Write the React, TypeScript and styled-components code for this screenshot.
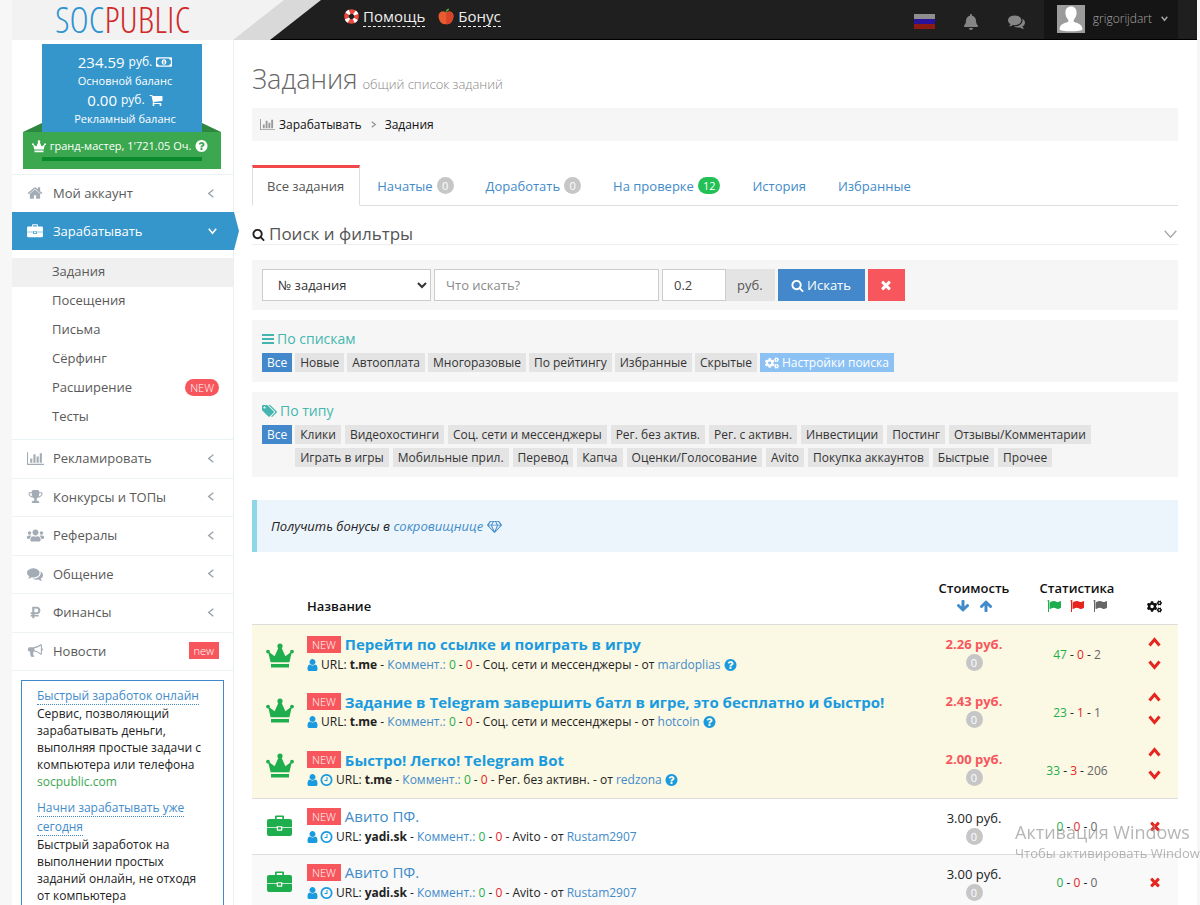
import React from "react";
import styled, { createGlobalStyle, css } from "styled-components";
import {
  FaBell,
  FaCogs,
  FaRegMoneyBillAlt,
  FaRubleSign,
  FaUsers,
} from "react-icons/fa";

const GlobalStyle = createGlobalStyle`
  *, *::before, *::after { box-sizing: border-box; }
  html { overflow-x: hidden; }
  body {
    margin: 0;
    background: #f7f7f7;
    color: #222;
    font-family: "Open Sans", "Noto Sans", sans-serif;
    font-size: 12px;
    line-height: 18px;
  }
  a { color: #428bca; text-decoration: none; }
  h1, h2, h3, p, ul { margin: 0; padding: 0; }
  ul { list-style: none; }
  button, input, select { font-family: inherit; margin: 0; }
`;

/* ---------- icons ---------- */

const paths = {
  search:
    "M1216 832q0-185-131.5-316.5t-316.5-131.5-316.5 131.5-131.5 316.5 131.5 316.5 316.5 131.5 316.5-131.5 131.5-316.5zm512 832q0 52-38 90t-90 38q-54 0-90-38l-343-342q-179 124-399 124-143 0-273.5-55.5t-225-150-150-225-55.5-273.5 55.5-273.5 150-225 225-150 273.5-55.5 273.5 55.5 225 150 150 225 55.5 273.5q0 220-124 399l343 343q37 37 37 90z",
  user:
    "M1536 1399q0 109-62.5 187t-150.5 78h-854q-88 0-150.5-78t-62.5-187q0-85 8.5-160.5t31.5-152 58.5-131 94-89 134.5-34.5q131 128 313 128t313-128q76 0 134.5 34.5t94 89 58.5 131 31.5 152 8.5 160.5zm-256-887q0 159-112.5 271.5t-271.5 112.5-271.5-112.5-112.5-271.5 112.5-271.5 271.5-112.5 271.5 112.5 112.5 271.5z",
  clock:
    "M1024 544v448q0 14-9 23t-23 9h-320q-14 0-23-9t-9-23v-64q0-14 9-23t23-9h224v-352q0-14 9-23t23-9h64q14 0 23 9t9 23zm416 352q0-148-73-273t-198-198-273-73-273 73-198 198-73 273 73 273 198 198 273 73 273-73 198-198 73-273zm224 0q0 209-103 385.5t-279.5 279.5-385.5 103-385.5-103-279.5-279.5-103-385.5 103-385.5 279.5-279.5 385.5-103 385.5 103 279.5 279.5 103 385.5z",
  question:
    "M1024 1376v-192q0-14-9-23t-23-9h-192q-14 0-23 9t-9 23v192q0 14 9 23t23 9h192q14 0 23-9t9-23zm256-672q0-88-55.5-163t-138.5-116-170-41q-243 0-371 213-15 24 8 42l132 100q7 6 19 6 16 0 25-12 53-68 86-92 34-24 86-24 48 0 85.5 26t37.5 59q0 38-20 61t-68 45q-63 28-115.5 86.5t-52.5 125.5v36q0 14 9 23t23 9h192q14 0 23-9t9-23q0-19 21.5-49.5t54.5-49.5q32-18 49-28.5t46-35 44.5-48 28-60.5 12.5-81zm384 192q0 209-103 385.5t-279.5 279.5-385.5 103-385.5-103-279.5-279.5-103-385.5 103-385.5 279.5-279.5 385.5-103 385.5 103 279.5 279.5 103 385.5z",
  times:
    "M1490 1322q0 40-28 68l-136 136q-28 28-68 28t-68-28l-294-294-294 294q-28 28-68 28t-68-28l-136-136q-28-28-28-68t28-68l294-294-294-294q-28-28-28-68t28-68l136-136q28-28 68-28t68 28l294 294 294-294q28-28 68-28t68 28l136 136q28 28 28 68t-28 68l-294 294 294 294q28 28 28 68z",
  chart:
    "M640 896v512h-256v-512h256zm384-512v1024h-256v-1024h256zm1024 1152v128h-2048v-1536h128v1408h1920zm-640-896v768h-256v-768h256zm384-384v1152h-256v-1152h256z",
  comments:
    "M1408 768q0 139-94 257t-256.5 186.5-353.5 68.5q-86 0-176-16-124 88-278 128-36 9-86 16h-3q-11 0-20.5-8t-11.5-21q-1-3-1-6.5t.5-6.5 2-6l2.5-5 3.5-5.5 4-5 4.5-5 4-4.5q5-6 23-25t26-29.5 22.5-29 25-38.5 20.5-44q-124-72-195-177t-71-224q0-139 94-257t256.5-186.5 353.5-68.5 353.5 68.5 256.5 186.5 94 257zm384 256q0 120-71 224.5t-195 176.5q10 24 20.5 44t25 38.5 22.5 29 26 29.5 23 25q1 1 4 4.5t4.5 5 4 5 3.5 5.5l2.5 5 2 6 .5 6.5-1 6.5q-3 14-13 22t-22 7q-50-7-86-16-154-40-278-128-90 16-176 16-271 0-472-132 58 4 88 4 161 0 309-45t264-129q125-92 192-212t67-254q0-77-23-152 129 71 204 178t75 230z",
  flag:
    "M320 256q0 72-64 110v1266q0 13-9.5 22.5t-22.5 9.5h-64q-13 0-22.5-9.5t-9.5-22.5v-1266q-64-38-64-110 0-53 37.5-90.5t90.5-37.5 90.5 37.5 37.5 90.5zm1472 64v763q0 25-12.5 38.5t-39.5 27.5q-215 116-369 116-61 0-123.5-22t-108.5-48-115.5-48-142.5-22q-192 0-464 146-17 9-33 9-26 0-45-19t-19-45v-742q0-32 31-55 21-14 79-43 236-120 421-120 107 0 200 29t219 88q38 19 88 19 54 0 117.5-21t110-47 88-47 54.5-21q26 0 45 19t19 45z",
  home:
    "M1472 992v480q0 26-19 45t-45 19h-384v-384h-256v384h-384q-26 0-45-19t-19-45v-480q0-1 .5-3t.5-3l575-474 575 474q1 2 1 6zm223-69l-62 74q-8 9-21 11h-3q-13 0-21-7l-692-577-692 577q-12 8-24 7-13-2-21-11l-62-74q-8-10-7-23.5t11-21.5l719-599q32-26 76-26t76 26l244 204v-195q0-14 9-23t23-9h192q14 0 23 9t9 23v408l219 182q10 8 11 21.5t-7 23.5z",
  tags:
    "M448 448q0-53-37.5-90.5t-90.5-37.5-90.5 37.5-37.5 90.5 37.5 90.5 90.5 37.5 90.5-37.5 37.5-90.5zm1067 576q0 53-37 90l-491 492q-39 37-91 37-53 0-90-37l-715-716q-38-37-64.5-101t-26.5-117v-416q0-52 38-90t90-38h416q53 0 117 26.5t102 64.5l715 714q37 39 37 91zm384 0q0 53-37 90l-491 492q-39 37-91 37-36 0-59-14t-53-45l470-470q37-37 37-90 0-52-37-91l-715-714q-38-38-102-64.5t-117-26.5h224q53 0 117 26.5t102 64.5l715 714q37 39 37 91z",
  arrowDown:
    "M1675 832q0 53-37 90l-651 652q-39 37-91 37-53 0-90-37l-651-652q-38-36-38-90 0-53 38-91l74-75q39-37 91-37 53 0 90 37l294 294v-704q0-52 38-90t90-38h128q52 0 90 38t38 90v704l294-294q37-37 90-37 52 0 91 37l75 75q37 39 37 91z",
  arrowUp:
    "M1675 960q0-53-37-90l-651-652q-39-37-91-37-53 0-90 37l-651 652q-38 36-38 90 0 53 38 91l74 75q39 37 91 37 53 0 90-37l294-294v704q0 52 38 90t90 38h128q52 0 90-38t38-90v-704l294 294q37 37 90 37 52 0 91-37l75-75q37-39 37-91z",
  bullhorn:
    "M1664 640q53 0 90.5 37.5t37.5 90.5-37.5 90.5-90.5 37.5v384q0 52-38 90t-90 38q-417-347-812-380-58 19-91 66t-31 100.5 40 92.5q-20 33-23 65.5t6 58 33.5 55 48 50 61.5 50.5q-29 58-111.5 83t-168.5 11.5-132-55.5q-7-23-29.5-87.5t-32-94.5-23-89-15-101 3.5-98.5 22-110.5h-122q-66 0-113-47t-47-113v-192q0-66 47-113t113-47h480q435 0 896-384 52 0 90 38t38 90v384zm-128 604v-954q-394 302-768 343v270q377 42 768 341z",
  trophy:
    "M522 883q-74-162-74-371h-256v96q0 78 94.5 162t235.5 113zm1078-275v-96h-256q0 209-74 371 141-29 235.5-113t94.5-162zm128-128v128q0 71-41.5 143t-112 130-173 97.5-215.5 44.5q-42 54-95 95-38 34-52.5 72.5t-14.5 89.5q0 54 30.5 91t97.5 37q75 0 133.5 45.5t58.5 114.5v64q0 14-9 23t-23 9h-832q-14 0-23-9t-9-23v-64q0-69 58.5-114.5t133.5-45.5q67 0 97.5-37t30.5-91q0-51-14.5-89.5t-52.5-72.5q-53-41-95-95-113-5-215.5-44.5t-173-97.5-112-130-41.5-143v-128q0-40 28-68t68-28h288v-96q0-66 47-113t113-47h576q66 0 113 47t47 113v96h288q40 0 68 28t28 68z",
  cart:
    "M704 1536q0 52-38 90t-90 38-90-38-38-90 38-90 90-38 90 38 38 90zm896 0q0 52-38 90t-90 38-90-38-38-90 38-90 90-38 90 38 38 90zm128-1088v512q0 24-16.5 42.5t-40.5 21.5l-1044 122q13 60 13 70 0 16-24 64h920q26 0 45 19t19 45-19 45-45 19h-1024q-26 0-45-19t-19-45q0-11 8-31.5t16-36 21.5-40 15.5-29.5l-177-823h-204q-26 0-45-19t-19-45 19-45 45-19h256q16 0 28.5 6.5t19.5 15.5 13 24.5 8 26 5.5 29.5 4.5 26h1201q26 0 45 19t19 45z",
  diamond:
    "M212 768l623 665-300-665h-323zM1024 1540l349-772h-698l349 772zM578 640l204-384h-262l-288 384h346zM1213 1433l623-665h-323l-300 665zM723 640h602l-204-384h-194l-204 384zM1470 640h346l-288-384h-262l204 384zM1651 154l384 512q14 18 13 41.5t-17 40.5l-960 1024q-18 20-47 20t-47-20l-960-1024q-16-17-17-40.5t13-41.5l384-512q18-26 51-26h1152q33 0 51 26z",
};

/* Horizontal extent of the glyphs that do not fill the usual square: [left, width]. */
const extents: Record<string, [number, number]> = {
  chart: [0, 2048],
  tags: [0, 1920],
  diamond: [0, 2048],
  user: [192, 1408],
  clock: [64, 1664],
  question: [64, 1664],
};

const Glyph = styled.svg`
  display: inline-block;
  flex: none;
  fill: currentColor;
  vertical-align: -2px;
`;

function Icon({ name, size = 14 }: { name: keyof typeof paths; size?: number }) {
  const [x, w] = extents[name] || [0, 1792];
  return (
    <Glyph width={Math.round((size * w) / 1792)} height={size} viewBox={`${x} 0 ${w} 1792`} aria-hidden="true">
      <path fillRule="evenodd" d={paths[name]} />
    </Glyph>
  );
}

function Crown({ size }: { size: number }) {
  return (
    <Glyph width={size} height={Math.round((size * 26) / 28)} viewBox="0 0 28 26" aria-hidden="true">
      <path d="M4.6 19.2 2.3 9.6 3 9l5.6 4.2L12.800 4h2.400l4.200 9.200L25 9l.7.600-2.300 9.600zM5 21h18v3.600H5z" />
      <circle cx="14" cy="3" r="2.600" />
      <circle cx="2" cy="8.600" r="1.900" />
      <circle cx="26" cy="8.600" r="1.900" />
    </Glyph>
  );
}

function Briefcase({ size }: { size: number }) {
  return (
    <Glyph width={size} height={Math.round((size * 22) / 25)} viewBox="0 0 25 22" aria-hidden="true">
      <path
        fillRule="evenodd"
        d="M8 4V1.500Q8 .5 9 .5h7q1 0 1 1V4h6q2 0 2 2v6H15.300v-.8H9.700v.8H0V6q0-2 2-2zM9.700 4h5.600V2H9.700zM0 12.800h9.700V15q0 .8.800.8h4q.8 0 .8-.8v-2.200H25V19q0 2-2 2H2q-2 0-2-2zM11 12.200h3v2.400h-3z"
      />
    </Glyph>
  );
}

function Chevron({ dir, w, h, stroke }: { dir: "left" | "right" | "up" | "down"; w: number; h: number; stroke: number }) {
  const s = stroke / 2 + 1;
  const d = {
    left: `M${w - s} ${s}L${s} ${h / 2}L${w - s} ${h - s}`,
    right: `M${s} ${s}L${w - s} ${h / 2}L${s} ${h - s}`,
    up: `M${s} ${h - s}L${w / 2} ${s}L${w - s} ${h - s}`,
    down: `M${s} ${s}L${w / 2} ${h - s}L${w - s} ${s}`,
  }[dir];
  return (
    <svg width={w} height={h} viewBox={`0 0 ${w} ${h}`} fill="none" stroke="currentColor" strokeWidth={stroke} aria-hidden="true">
      <path d={d} />
    </svg>
  );
}

function Lifebuoy() {
  return (
    <svg width="15" height="15" viewBox="0 0 15 15" aria-hidden="true">
      <circle cx="7.5" cy="7.5" r="5" fill="none" stroke="#e9493f" strokeWidth="4.600" />
      <circle cx="7.5" cy="7.5" r="5" fill="none" stroke="#fff" strokeWidth="4.600" strokeDasharray="2.850 5" strokeDashoffset="-2.500" />
    </svg>
  );
}

function Apple() {
  return (
    <svg width="16" height="17" viewBox="0 0 16 17" aria-hidden="true">
      <path d="M8 4.500C6 3 4.200 3 2.500 4 .6 5.200 0 8 1 11c1 3.500 3.500 6 7 5 3.500 1 6-1.500 7-5 1-3 .4-5.800-1.500-7C11.800 3 10 3.500 8 4.500z" fill="#ea5a30" />
      <path d="M8 4.500c.7 3 .5 8 0 11.500 3.500 1 6-1.500 7-5 1-3 .4-5.800-1.500-7C11.800 3 10 3.500 8 4.500z" fill="#d8442a" />
      <path d="M7.600 5C7.400 3 8.500 1 11 .6c.3 1.500-.9 2.700-2.400 2.900L8.500 5z" fill="#5da93b" />
    </svg>
  );
}

function RussianFlag() {
  return (
    <svg width="21" height="15" viewBox="0 0 21 15" aria-hidden="true">
      <path fill="#8e8e8e" d="M0 0h21v5H0z" />
      <path fill="#2b1399" d="M0 5h21v5H0z" />
      <path fill="#8c1c12" d="M0 10h21v5H0z" />
    </svg>
  );
}

function Avatar() {
  return (
    <svg width="28" height="28" viewBox="0 0 28 28" role="img" aria-label="grigorijdart">
      <path fill="#9b9b9b" d="M0 0h28v28H0z" />
      <path fill="#fff" d="M14 1.500c3.600 0 5.600 2.600 5.600 6 0 3-1 5.200-2.600 7-.6.800-.6 2 .2 2.500 2.800 1.200 7.800 1.500 8.300 7.200C25.500 27 2.500 27 2.500 24.200 3 18.500 8 18.200 10.800 17c.8-.5.8-1.700.2-2.500-1.600-1.800-2.600-4-2.600-7 0-3.400 2-6 5.600-6z" />
    </svg>
  );
}

/* ---------- header ---------- */

const Page = styled.div`
  margin: 0 3px 0 12px;
  min-height: 100vh;
  background: #fff;
`;

const Header = styled.header`
  display: flex;
  align-items: stretch;
  height: 40px;
  background: #1f1f1f;
  border-bottom: 1px solid #000;
`;

const Brand = styled.div`
  position: relative;
  width: 309px;
  flex: none;
  margin-bottom: -1px;

  &::before,
  &::after {
    content: "";
    position: absolute;
    inset: 0;
  }
  &::before {
    background: #d9d9d9;
    clip-path: polygon(0 0, 100% 0, 258px 100%, 0 100%);
  }
  &::after {
    background: #f2f2f2;
    clip-path: polygon(0 0, 272px 0, 221px 100%, 0 100%);
  }
`;

const BrandName = styled.a`
  position: relative;
  z-index: 1;
  display: flex;
  align-items: center;
  height: 100%;
  padding: 0 0 2px 43px;
  font-family: "Open Sans Condensed Light", "Open Sans Condensed", "Open Sans", sans-serif;
  font-weight: 300;
  font-size: 37px;
  line-height: 38px;
  color: #2e93d0;
`;

const BrandAccent = styled.span`
  color: #d12a2a;
`;

const HeaderLinks = styled.nav`
  display: flex;
  align-items: center;
  gap: 13px;
  flex: 1;
  padding: 0 0 6px 23px;
`;

const HeaderLink = styled.a`
  display: flex;
  align-items: center;
  gap: 4px;
  color: #eee;
  font-size: 15px;
  line-height: 20px;
`;

const DashedText = styled.span`
  border-bottom: 1px dashed #eee;
`;

const HeaderTools = styled.div`
  display: flex;
  align-items: center;
  margin-right: 19px;
`;

const ToolButton = styled.button`
  display: flex;
  align-items: center;
  justify-content: center;
  width: 46px;
  height: 39px;
  padding: 4px 0 0;
  border: 0;
  background: none;
  color: #858585;
`;

const UserButton = styled.button`
  display: flex;
  align-items: center;
  gap: 8px;
  height: 39px;
  margin-left: 4px;
  padding: 0 9px 2px 13px;
  border: 0;
  background: #151515;
  color: #a6a6a6;
  font-size: 12px;
  font-weight: 300;
`;

/* ---------- sidebar ---------- */

const Columns = styled.div`
  display: flex;
  align-items: stretch;
`;

const Sidebar = styled.aside`
  width: 222px;
  flex: none;
  border-right: 1px solid #e9f0f4;
  background: #fff;
`;

const Balance = styled.div`
  margin: 4px 31px 0 30px;
  padding: 8px 0 4px 6px;
  background: #3596cc;
  color: #fff;
  text-align: center;
`;

const BalanceLine = styled.div`
  display: flex;
  justify-content: center;
  align-items: center;
  gap: 4px;
  font-size: 12px;
  line-height: 20px;
`;

const BalanceValue = styled.span`
  font-size: 15px;
`;

const BalanceLabel = styled.div`
  font-size: 11px;
  line-height: 18px;
`;

const Ribbon = styled.div`
  position: relative;
  margin: 0 12px 5px 11px;
  padding: 5px 0 8px;
  background: #3ba74f;
  color: #fff;

  &::before,
  &::after {
    content: "";
    position: absolute;
    bottom: 100%;
    width: 19px;
    height: 9px;
    background: #2e873f;
  }
  &::before { left: 0; clip-path: polygon(0 100%, 100% 0, 100% 100%); }
  &::after { right: 0; clip-path: polygon(0 0, 100% 100%, 0 100%); }
`;

const Rank = styled.div`
  display: flex;
  align-items: center;
  justify-content: center;
  gap: 4px;
  padding-right: 4px;
  font-size: 11px;
  line-height: 18px;
  white-space: nowrap;
`;

const RankBar = styled.div`
  height: 4px;
  margin: 2px 19px 0;
  background: #0a8a2c;
`;

const Menu = styled.ul<{ $spread?: boolean }>`
  border-top: 1px solid #e9f2f5;
  ${(p) =>
    p.$spread &&
    css`
      display: grid;
      grid-auto-rows: 1fr;
      min-height: 232px;
    `}
`;

const MenuItem = styled.li<{ $ruled?: boolean }>`
  display: grid;
  border-bottom: ${(p) => (p.$ruled ? "1px solid #eef3f5" : "0")};
`;

const MenuLink = styled.a<{ $active?: boolean }>`
  position: relative;
  display: flex;
  align-items: center;
  min-height: 37px;
  padding: 0 14px 1px 12px;
  color: ${(p) => (p.$active ? "#fff" : "#5a5a5a")};
  font-size: 13px;
  ${(p) =>
    p.$active &&
    css`
      min-height: 38px;
      margin-right: -1px;
      background: #3596cc;
      &::after {
        content: "";
        position: absolute;
        left: 100%;
        top: 0;
        bottom: 0;
        width: 5px;
        background: #3596cc;
        clip-path: polygon(0 0, 100% 50%, 0 100%);
      }
    `}
`;

const MenuIcon = styled.span<{ $active?: boolean }>`
  display: flex;
  justify-content: center;
  width: 22px;
  margin-right: 7px;
  color: ${(p) => (p.$active ? "#fff" : "#a3acb5")};
`;

const MenuText = styled.span`
  flex: 1;
`;

const MenuArrow = styled.span<{ $active?: boolean }>`
  display: flex;
  justify-content: center;
  width: 16px;
  color: ${(p) => (p.$active ? "#fff" : "#9aa3ab")};
`;

const SubMenu = styled.ul`
  padding: 8px 0 7px;
`;

const SubLink = styled.a<{ $current?: boolean }>`
  display: flex;
  align-items: center;
  justify-content: space-between;
  height: 29px;
  padding: 0 14px 3px 40px;
  background: ${(p) => (p.$current ? "#f0f0f0" : "none")};
  color: #5a5a5a;
  font-size: 13px;
`;

const Label = styled.span<{ $round?: boolean }>`
  padding: 0 5px;
  border-radius: ${(p) => (p.$round ? "9px" : "0")};
  background: #f7575c;
  color: #fff;
  font-size: 11px;
  font-weight: 300;
  line-height: 17px;
`;

const Promo = styled.div`
  margin: 9px 9px 20px;
  padding: 5px 14px 20px 15px;
  border: 1px solid #4289c9;
  line-height: 17px;
`;

const PromoItem = styled.div`
  & + & { margin-top: 8px; }
`;

const PromoTitle = styled.a`
  border-bottom: 1px dotted #4289c9;
  line-height: 19px;
`;

const PromoSite = styled.div`
  color: #3ba74f;
`;

/* ---------- content ---------- */

const Content = styled.main`
  flex: 1;
  min-width: 0;
  padding: 18px 19px 0 18px;
`;

const Title = styled.h1`
  display: flex;
  align-items: baseline;
  gap: 5px;
  color: #666;
  font-size: 27px;
  font-weight: 300;
  line-height: 42px;
`;

const TitleNote = styled.small`
  color: #888;
  font-size: 13px;
  line-height: 18px;
`;

const Crumbs = styled.nav`
  display: flex;
  align-items: center;
  gap: 8px;
  height: 33px;
  margin-top: 8px;
  padding: 0 8px;
  background: #f6f6f6;
  color: #999;
`;

const Crumb = styled.a`
  display: flex;
  align-items: center;
  gap: 4px;
  color: #111;
`;

const CrumbIcon = styled.span`
  display: flex;
  color: #999;
`;

const Tabs = styled.ul`
  display: flex;
  gap: 2px;
  margin-top: 24px;
  border-bottom: 1px solid #ddd;
`;

const Tab = styled.a<{ $active?: boolean }>`
  display: flex;
  align-items: center;
  gap: 4px;
  height: 41px;
  margin-bottom: -1px;
  padding: 0 14px 2px;
  border: 1px solid transparent;
  border-top: 3px solid transparent;
  font-size: 13px;
  ${(p) =>
    p.$active &&
    css`
      padding-right: 15px;
      border-color: #f3484b #ddd transparent;
      background: #fff;
      color: #555;
    `}
`;

const Badge = styled.span<{ $green?: boolean }>`
  display: inline-block;
  min-width: 17px;
  padding: 0 5px;
  border-radius: 9px;
  background: ${(p) => (p.$green ? "#22c055" : "#c6c6c6")};
  color: #fff;
  font-size: 11px;
  font-weight: 400;
  line-height: 17px;
  text-align: center;
`;

const FilterHead = styled.div`
  display: flex;
  align-items: center;
  justify-content: space-between;
  margin-top: 18px;
  border-bottom: 1px solid #eee;
  color: #aaa;
`;

const FilterTitle = styled.h2`
  display: flex;
  align-items: center;
  gap: 4px;
  color: #555;
  font-size: 17px;
  font-weight: 400;
  line-height: 20px;
`;

const DarkIcon = styled.span`
  display: flex;
  color: #222;
`;

const Panel = styled.section`
  margin-top: 10px;
  padding: 9px 10px 10px;
  background: #f6f6f6;
`;

const SearchForm = styled.form`
  display: flex;
  gap: 3px;
  margin-top: 15px;
  padding: 9px 10px;
  background: #f6f6f6;
`;

const field = css`
  height: 32px;
  border: 1px solid #ccc;
  border-radius: 0;
  background: #fff;
  color: #444;
  font-size: 13px;
`;

const Select = styled.select`
  ${field}
  width: 169px;
  padding: 0 0 0 11px;
  color: #333;
`;

const TextInput = styled.input<{ $w: number }>`
  ${field}
  width: ${(p) => p.$w}px;
  padding: 0 11px;
  &::placeholder { color: #8a8a8a; }
`;

const InputGroup = styled.div`
  display: flex;
`;

const Addon = styled.label`
  display: flex;
  align-items: center;
  width: 49px;
  padding-left: 11px;
  background: #e4e4e4;
  color: #555;
  font-size: 13px;
`;

const Button = styled.button<{ $danger?: boolean }>`
  display: flex;
  align-items: center;
  justify-content: center;
  gap: 3px;
  width: ${(p) => (p.$danger ? "37px" : "87px")};
  height: 32px;
  padding: 0 1px 0 0;
  border: 0;
  background: ${(p) => (p.$danger ? "#f7575c" : "#4288ca")};
  color: #fff;
  font-size: 13px;
`;

const PanelTitle = styled.h3`
  display: flex;
  align-items: center;
  gap: 3px;
  margin-bottom: 4px;
  color: #45b6af;
  font-size: 14px;
  font-weight: 400;
  line-height: 20px;
`;

const TagArea = styled.div`
  display: flex;
  align-items: flex-start;
  gap: 3px;
`;

const TagList = styled.div<{ $gap: number }>`
  display: flex;
  flex-wrap: wrap;
  gap: 4px ${(p) => p.$gap}px;
`;

const Tag = styled.a<{ $kind?: "active" | "settings" }>`
  display: flex;
  align-items: center;
  gap: 3px;
  height: 19px;
  padding: 0 5px;
  background: ${(p) => (p.$kind === "active" ? "#4288ca" : p.$kind === "settings" ? "#8cc1f4" : "#e4e4e4")};
  color: ${(p) => (p.$kind ? "#fff" : "#333")};
  white-space: nowrap;
`;

const Notice = styled.div`
  margin-top: 23px;
  padding: 17px 14px;
  border-left: 5px solid #8fd6e6;
  background: #ecf5fb;
  font-size: 13px;
  font-style: italic;
`;

/* ---------- task table ---------- */

const Table = styled.table`
  width: 100%;
  margin-top: 25px;
  border-collapse: collapse;
  table-layout: fixed;
`;

const Th = styled.th<{ $w?: number; $left?: boolean }>`
  width: ${(p) => (p.$w ? `${p.$w}px` : "auto")};
  height: 47px;
  padding: 0 0 8px;
  color: #111;
  font-size: 13px;
  font-weight: 600;
  line-height: 19px;
  text-align: ${(p) => (p.$left ? "left" : "center")};
  vertical-align: bottom;
`;

const SortIcons = styled.span<{ $gap: number }>`
  display: flex;
  justify-content: center;
  align-items: center;
  gap: ${(p) => p.$gap}px;
  height: 18px;
`;

const Row = styled.tr<{ $bg: string; $ruled?: boolean }>`
  background: ${(p) => p.$bg};
  > td { border-top: ${(p) => (p.$ruled ? "1px solid #ddd" : "0")}; }
`;

const Td = styled.td<{ $center?: boolean; $h?: number; $top?: number; $pad?: string }>`
  height: ${(p) => (p.$h ? `${p.$h}px` : "auto")};
  padding: ${(p) => p.$pad || `${p.$top || 0}px 0 0`};
  text-align: ${(p) => (p.$center ? "center" : "left")};
  vertical-align: ${(p) => (p.$top ? "top" : "middle")};
`;

const Stack = styled.div<{ $gap: number }>`
  display: flex;
  flex-direction: column;
  align-items: center;
  gap: ${(p) => p.$gap}px;
`;

const Tint = styled.span<{ $c: string }>`
  color: ${(p) => p.$c};
`;

const IconCell = styled.span<{ $c: string }>`
  display: flex;
  justify-content: center;
  color: ${(p) => p.$c};
`;

const TaskTitle = styled.div`
  display: flex;
  align-items: center;
  gap: 4px;
  height: 21px;
  white-space: nowrap;
`;

const TaskLink = styled.a<{ $vip?: boolean }>`
  color: ${(p) => (p.$vip ? "#1a9be0" : "#428bca")};
  font-size: 15px;
  font-weight: ${(p) => (p.$vip ? 700 : 400)};
`;

const TaskMeta = styled.div`
  display: flex;
  align-items: center;
  gap: 3px;
  height: 20px;
  line-height: 20px;
  white-space: nowrap;
`;

const TaskFlags = styled.span`
  display: flex;
  gap: 2px;
  color: #1a9be0;
`;

const Price = styled.div<{ $vip?: boolean }>`
  color: ${(p) => (p.$vip ? "#f7575c" : "#222")};
  font-size: 13px;
  font-weight: ${(p) => (p.$vip ? 700 : 400)};
  line-height: 20px;
`;

const MoveButton = styled.button`
  display: flex;
  padding: 0;
  border: 0;
  background: none;
  color: #e6251f;
`;

const Watermark = styled.div`
  position: fixed;
  right: 0;
  bottom: 43px;
  width: 185px;
  overflow: hidden;
  color: rgba(150, 150, 150, 0.7);
  font-size: 13px;
  line-height: 18px;
  white-space: nowrap;
  pointer-events: none;
`;

const WatermarkTitle = styled.div`
  font-size: 18px;
  line-height: 24px;
`;

/* ---------- data ---------- */

const GREEN = "#1fae4e";
const RED = "#e6251f";
const GREY = "#666";

const subItems = ["Задания", "Посещения", "Письма", "Сёрфинг", "Расширение", "Тесты"];

const menuItems: { text: string; icon: React.ReactNode; label?: string }[] = [
  { text: "Рекламировать", icon: <Icon name="chart" size={15} /> },
  { text: "Конкурсы и ТОПы", icon: <Icon name="trophy" size={15} /> },
  { text: "Рефералы", icon: <FaUsers size={17} /> },
  { text: "Общение", icon: <Icon name="comments" size={16} /> },
  { text: "Финансы", icon: <FaRubleSign size={13} /> },
  { text: "Новости", icon: <Icon name="bullhorn" size={15} />, label: "new" },
];

const tabs: { text: string; count?: number; green?: boolean; active?: boolean }[] = [
  { text: "Все задания", active: true },
  { text: "Начатые", count: 0 },
  { text: "Доработать", count: 0 },
  { text: "На проверке", count: 12, green: true },
  { text: "История" },
  { text: "Избранные" },
];

const listTags = ["Новые", "Автооплата", "Многоразовые", "По рейтингу", "Избранные", "Скрытые"];

const typeTags = [
  "Клики", "Видеохостинги", "Соц. сети и мессенджеры", "Рег. без актив.", "Рег. с активн.",
  "Инвестиции", "Постинг", "Отзывы/Комментарии", "Играть в игры", "Мобильные прил.", "Перевод",
  "Капча", "Оценки/Голосование", "Avito", "Покупка аккаунтов", "Быстрые", "Прочее",
];

type Task = {
  title: string; url: string; kind: string; author: string; price: string;
  stats: [number, number, number]; clock?: boolean; vip?: boolean;
};

const tasks: Task[] = [
  { title: "Перейти по ссылке и поиграть в игру", url: "t.me", kind: "Соц. сети и мессенджеры", author: "mardoplias", price: "2.26", stats: [47, 0, 2], vip: true },
  { title: "Задание в Telegram завершить батл в игре, это бесплатно и быстро!", url: "t.me", kind: "Соц. сети и мессенджеры", author: "hotcoin", price: "2.43", stats: [23, 1, 1], vip: true },
  { title: "Быстро! Легко! Telegram Bot", url: "t.me", kind: "Рег. без активн.", author: "redzona", price: "2.00", stats: [33, 3, 206], clock: true, vip: true },
  { title: "Авито ПФ.", url: "yadi.sk", kind: "Avito", author: "Rustam2907", price: "3.00", stats: [0, 0, 0], clock: true },
  { title: "Авито ПФ.", url: "yadi.sk", kind: "Avito", author: "Rustam2907", price: "3.00", stats: [0, 0, 0], clock: true },
];

function TaskRow({ task, index }: { task: Task; index: number }) {
  const { vip } = task;
  const bg = vip ? "#fbf8e3" : index % 2 ? "#fff" : "#f9f9f9";
  return (
    <Row $bg={bg} $ruled={!vip || index === 0}>
      {vip && index === 0 && (
        <Td rowSpan={3}>
          <IconCell $c={GREEN}>
            <Stack $gap={29}>
              <Crown size={28} />
              <Crown size={28} />
              <Crown size={28} />
            </Stack>
          </IconCell>
        </Td>
      )}
      {!vip && (
        <Td>
          <IconCell $c={GREEN}><Briefcase size={25} /></IconCell>
        </Td>
      )}
      <Td $h={vip ? 58 : 56} $top={vip ? 9 : 7}>
        <TaskTitle>
          <Label>NEW</Label>
          <TaskLink href="#" $vip={vip}>{task.title}</TaskLink>
        </TaskTitle>
        <TaskMeta>
          <TaskFlags>
            <Icon name="user" size={14} />
            {task.clock && <Icon name="clock" size={14} />}
          </TaskFlags>
          <span>
            URL: <b>{task.url}</b> - <a href="#">Коммент.:</a> <Tint $c={GREEN}>0</Tint> - <Tint $c={RED}>0</Tint> - {task.kind} - от{" "}
            <a href="#">{task.author}</a>
          </span>
          {vip && <TaskFlags><Icon name="question" size={14} /></TaskFlags>}
        </TaskMeta>
      </Td>
      <Td $center $top={9}>
        <Price $vip={vip}>{task.price} руб.</Price>
        <Badge>0</Badge>
      </Td>
      <Td $center $pad={vip ? "4px 0 0" : "2px 0 0"}>
        <Tint $c={GREEN}>{task.stats[0]}</Tint> - <Tint $c={RED}>{task.stats[1]}</Tint> - <Tint $c={GREY}>{task.stats[2]}</Tint>
      </Td>
      {vip && index === 0 && (
        <Td rowSpan={3} $pad="0 0 6px">
          <Stack $gap={22}>
            {[0, 1, 2].map((n) => (
              <Stack $gap={11} key={n}>
                <MoveButton aria-label="Выше"><Chevron dir="up" w={15} h={11} stroke={3} /></MoveButton>
                <MoveButton aria-label="Ниже"><Chevron dir="down" w={15} h={11} stroke={3} /></MoveButton>
              </Stack>
            ))}
          </Stack>
        </Td>
      )}
      {!vip && (
        <Td>
          <Stack $gap={0}>
            <MoveButton aria-label="Скрыть"><Icon name="times" size={14} /></MoveButton>
          </Stack>
        </Td>
      )}
    </Row>
  );
}

export default function App() {
  return (
    <>
      <GlobalStyle />
      <Page>
        <Header>
          <Brand>
            <BrandName href="#">SOC<BrandAccent>PUBLIC</BrandAccent></BrandName>
          </Brand>
          <HeaderLinks>
            <HeaderLink href="#"><Lifebuoy /><DashedText>Помощь</DashedText></HeaderLink>
            <HeaderLink href="#"><Apple /><DashedText>Бонус</DashedText></HeaderLink>
          </HeaderLinks>
          <HeaderTools>
            <ToolButton aria-label="Язык"><RussianFlag /></ToolButton>
            <ToolButton aria-label="Уведомления"><FaBell size={16} /></ToolButton>
            <ToolButton aria-label="Сообщения"><Icon name="comments" size={17} /></ToolButton>
            <UserButton>
              <Avatar />
              grigorijdart
              <Chevron dir="down" w={9} h={7} stroke={1.4} />
            </UserButton>
          </HeaderTools>
        </Header>

        <Columns>
          <Sidebar>
            <Balance>
              <BalanceLine><BalanceValue>234.59</BalanceValue> руб. <FaRegMoneyBillAlt size={16} /></BalanceLine>
              <BalanceLabel>Основной баланс</BalanceLabel>
              <BalanceLine><BalanceValue>0.00</BalanceValue> руб. <Icon name="cart" size={14} /></BalanceLine>
              <BalanceLabel>Рекламный баланс</BalanceLabel>
            </Balance>
            <Ribbon>
              <Rank><Crown size={14} /> гранд-мастер, 1'721.05 Оч. <Icon name="question" size={14} /></Rank>
              <RankBar />
            </Ribbon>

            <Menu>
              <MenuItem>
                <MenuLink href="#">
                  <MenuIcon><Icon name="home" size={16} /></MenuIcon>
                  <MenuText>Мой аккаунт</MenuText>
                  <MenuArrow><Chevron dir="left" w={8} h={11} stroke={1.4} /></MenuArrow>
                </MenuLink>
              </MenuItem>
              <MenuItem>
                <MenuLink href="#" $active>
                  <MenuIcon $active><Briefcase size={16} /></MenuIcon>
                  <MenuText>Зарабатывать</MenuText>
                  <MenuArrow $active><Chevron dir="down" w={11} h={8} stroke={1.6} /></MenuArrow>
                </MenuLink>
                <SubMenu>
                  {subItems.map((text, i) => (
                    <li key={text}>
                      <SubLink href="#" $current={i === 0}>
                        {text}
                        {text === "Расширение" && <Label $round>NEW</Label>}
                      </SubLink>
                    </li>
                  ))}
                </SubMenu>
              </MenuItem>
            </Menu>
            <Menu $spread>
              {menuItems.map((m) => (
                <MenuItem key={m.text} $ruled>
                  <MenuLink href="#">
                    <MenuIcon>{m.icon}</MenuIcon>
                    <MenuText>{m.text}</MenuText>
                    {m.label ? <Label>{m.label}</Label> : <MenuArrow><Chevron dir="left" w={8} h={11} stroke={1.4} /></MenuArrow>}
                  </MenuLink>
                </MenuItem>
              ))}
            </Menu>

            <Promo>
              <PromoItem>
                <PromoTitle href="#">Быстрый заработок онлайн</PromoTitle>
                <p>Сервис, позволяющий зарабатывать деньги, выполняя простые задачи с компьютера или телефона</p>
                <PromoSite>socpublic.com</PromoSite>
              </PromoItem>
              <PromoItem>
                <PromoTitle href="#">Начни зарабатывать уже сегодня</PromoTitle>
                <p>Быстрый заработок на выполнении простых заданий онлайн, не отходя от компьютера</p>
              </PromoItem>
            </Promo>
          </Sidebar>

          <Content>
            <Title>Задания <TitleNote>общий список заданий</TitleNote></Title>
            <Crumbs>
              <Crumb href="#"><CrumbIcon><Icon name="chart" size={13} /></CrumbIcon>Зарабатывать</Crumb>
              <Chevron dir="right" w={7} h={9} stroke={1.4} />
              <Crumb href="#">Задания</Crumb>
            </Crumbs>

            <Tabs>
              {tabs.map((t) => (
                <li key={t.text}>
                  <Tab href="#" $active={t.active}>
                    {t.text}
                    {t.count !== undefined && <Badge $green={t.green}>{t.count}</Badge>}
                  </Tab>
                </li>
              ))}
            </Tabs>

            <FilterHead>
              <FilterTitle><DarkIcon><Icon name="search" size={13} /></DarkIcon>Поиск и фильтры</FilterTitle>
              <Chevron dir="down" w={15} h={10} stroke={1.4} />
            </FilterHead>

            <SearchForm>
              <Select aria-label="Критерий поиска"><option>№ задания</option></Select>
              <TextInput $w={225} type="text" placeholder="Что искать?" aria-label="Что искать?" />
              <InputGroup>
                <TextInput $w={64} type="text" id="price" defaultValue="0.2" />
                <Addon htmlFor="price">руб.</Addon>
              </InputGroup>
              <Button type="button"><Icon name="search" size={13} />Искать</Button>
              <Button type="button" $danger aria-label="Сбросить"><Icon name="times" size={14} /></Button>
            </SearchForm>

            <Panel>
              <PanelTitle>
                <Glyph width="12" height="12" viewBox="0 0 12 12"><path d="M0 1h12v2H0zM0 5h12v2H0zM0 9h12v2H0z" /></Glyph>
                По спискам
              </PanelTitle>
              <TagArea>
                <Tag href="#" $kind="active">Все</Tag>
                <TagList $gap={3}>
                  {listTags.map((t) => <Tag href="#" key={t}>{t}</Tag>)}
                  <Tag href="#" $kind="settings"><FaCogs size={14} />Настройки поиска</Tag>
                </TagList>
              </TagArea>
            </Panel>

            <Panel>
              <PanelTitle><Icon name="tags" size={14} />По типу</PanelTitle>
              <TagArea>
                <Tag href="#" $kind="active">Все</Tag>
                <TagList $gap={4}>
                  {typeTags.map((t) => <Tag href="#" key={t}>{t}</Tag>)}
                </TagList>
              </TagArea>
            </Panel>

            <Notice>
              Получить бонусы в <a href="#">сокровищнице <Icon name="diamond" size={13} /></a>
            </Notice>

            <Table>
              <thead>
                <tr>
                  <Th $w={55} aria-label="Тип" />
                  <Th $left>Название</Th>
                  <Th $w={98}>
                    Стоимость
                    <SortIcons $gap={9}>
                      <Tint $c="#428bca"><Icon name="arrowDown" size={14} /></Tint>
                      <Tint $c="#428bca"><Icon name="arrowUp" size={14} /></Tint>
                    </SortIcons>
                  </Th>
                  <Th $w={108}>
                    Статистика
                    <SortIcons $gap={9}>
                      <Tint $c={GREEN}><Icon name="flag" size={14} /></Tint>
                      <Tint $c={RED}><Icon name="flag" size={14} /></Tint>
                      <Tint $c={GREY}><Icon name="flag" size={14} /></Tint>
                    </SortIcons>
                  </Th>
                  <Th $w={47}><SortIcons $gap={0}><FaCogs size={15} /></SortIcons></Th>
                </tr>
              </thead>
              <tbody>
                {tasks.map((t, i) => <TaskRow task={t} index={i} key={i} />)}
              </tbody>
            </Table>
          </Content>
        </Columns>
      </Page>
      <Watermark>
        <WatermarkTitle>Активация Windows</WatermarkTitle>
        Чтобы активировать Windows
      </Watermark>
    </>
  );
}
